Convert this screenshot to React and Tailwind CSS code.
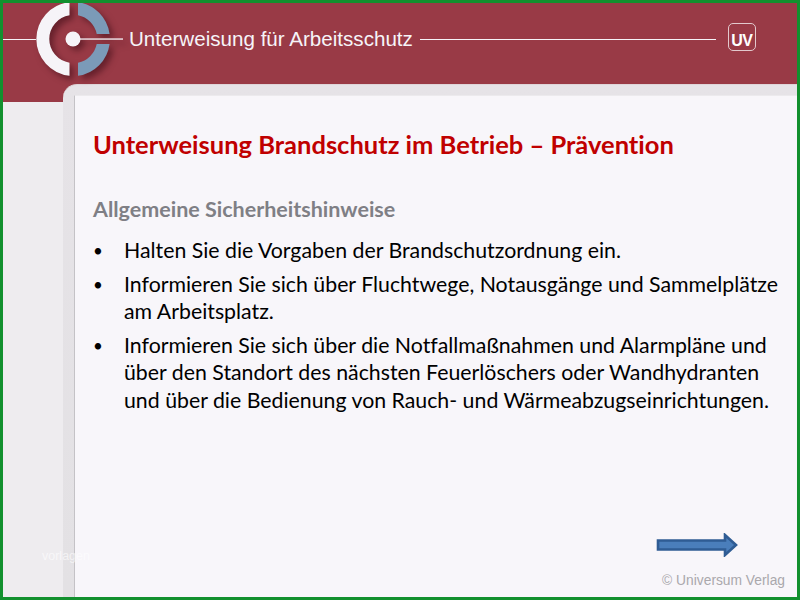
function Logo() {
  return (
    <svg className="w-[87px] h-[84px] shrink-0 self-start drop-shadow-[4px_4px_3px_rgba(50,5,15,0.5)]" viewBox="0 1 87 84">
      {/* white half ring, clipped at the header top */}
      <path d="M33.5 0.2 A37 37 0 0 0 33.5 73.8 L33.5 60.7 A24 24 0 0 1 33.5 13.3 Z" fill="#f6f4f8" />
      {/* blue ring, gap on the right where the line runs */}
      <path d="M42 0.2 A37 37 0 0 1 73.6 32 L60.7 32 A24 24 0 0 0 42 13.3 Z" fill="#7b9ab8" />
      <path d="M73.6 42 A37 37 0 0 1 42 73.8 L42 60.7 A24 24 0 0 0 60.7 42 Z" fill="#7b9ab8" />
      <circle cx="37" cy="37" r="7.5" fill="#f6f4f8" />
      <rect x="44" y="36.4" width="43" height="1.3" fill="#f6f4f8" />
    </svg>
  );
}

function UvBadge() {
  return (
    <div className="w-[28px] h-[28px] shrink-0 rounded-[5px] border border-[#e3c9cd] flex items-center justify-center">
      <span className="text-[16px] leading-none font-bold text-white pt-[7px] tracking-[-0.6px] font-['Liberation_Sans',sans-serif]">UV</span>
    </div>
  );
}

function Bullet({ children }) {
  return (
    <li className="flex">
      <span className="w-[31px] shrink-0 text-[17px]">•</span>
      <span>{children}</span>
    </li>
  );
}

export default function App() {
  return (
    <div className="relative w-[800px] h-[600px] border-[3px] border-[#12902e] flex flex-col overflow-hidden bg-[#eeecef] font-['Lato',sans-serif] [font-variant-ligatures:none]">
      <header className="h-[99px] shrink-0 bg-[#993a46]">
        <div className="h-[72px] flex items-center">
          <div className="w-[33px] h-px bg-[#f6f4f8] shrink-0" />
          <Logo />
          <span className="ml-[6px] text-[20.6px] leading-none text-[#f6f4f8] whitespace-nowrap font-['Liberation_Sans',sans-serif]">
            Unterweisung für Arbeitsschutz
          </span>
          <div className="ml-[7px] w-[296px] h-px bg-[#f6f4f8] shrink-0" />
          <div className="ml-[12px] mb-[4px]">
            <UvBadge />
          </div>
        </div>
      </header>

      <div className="flex-1 min-h-0 flex pl-[60px]">
        <main className="-mt-[18px] flex-1 flex flex-col pl-[11px] pt-[10px] rounded-tl-[14px] bg-gradient-to-b from-[#e6e3e7] to-[#e3e1e4] border-t border-[#dfd5d9]">
          <div className="flex-1 bg-[#f8f6fa] border-l border-t border-l-[#c4c2c6] border-t-[#eceaed] pl-[18px] pr-[12px] flex flex-col">
            <h1 className="mt-[33px] text-[25.5px] leading-[30px] font-bold text-[#c00000] whitespace-nowrap">
              Unterweisung Brandschutz im Betrieb – Prävention
            </h1>
            <h2 className="mt-[38px] text-[21.5px] leading-[24px] font-bold text-[#7f7f85]">
              Allgemeine Sicherheitshinweise
            </h2>
            <ul className="mt-[16px] text-[21.3px] leading-[27.5px] text-black flex flex-col gap-[6px]">
              <Bullet>Halten Sie die Vorgaben der Brandschutzordnung ein.</Bullet>
              <Bullet>Informieren Sie sich über Fluchtwege, Notausgänge und Sammelplätze am Arbeitsplatz.</Bullet>
              <Bullet>Informieren Sie sich über die Notfallmaßnahmen und Alarmpläne und über den Standort des nächsten Feuerlöschers oder Wandhydranten und über die Bedienung von Rauch- und Wärmeabzugseinrichtungen.</Bullet>
            </ul>
            <div className="mt-auto flex flex-col items-end">
              <svg className="w-[82px] h-[24px] mr-[47px]" viewBox="0 0 82 24">
                <path d="M2 7.5 H69 V2 L80 12 L69 22 V16.5 H2 Z" fill="#4a7ebb" stroke="#2f5c94" strokeWidth="2.6" />
              </svg>
              <span className="mt-[14px] mb-[6px] text-[13.8px] leading-[20px] text-[#aaa8ac] font-['Liberation_Sans',sans-serif]">
                © Universum Verlag
              </span>
            </div>
          </div>
        </main>
      </div>
      <span className="absolute left-[39px] bottom-[35px] text-[12.5px] leading-none text-white/60 font-['Liberation_Sans',sans-serif]">vorlagen</span>
    </div>
  );
}
